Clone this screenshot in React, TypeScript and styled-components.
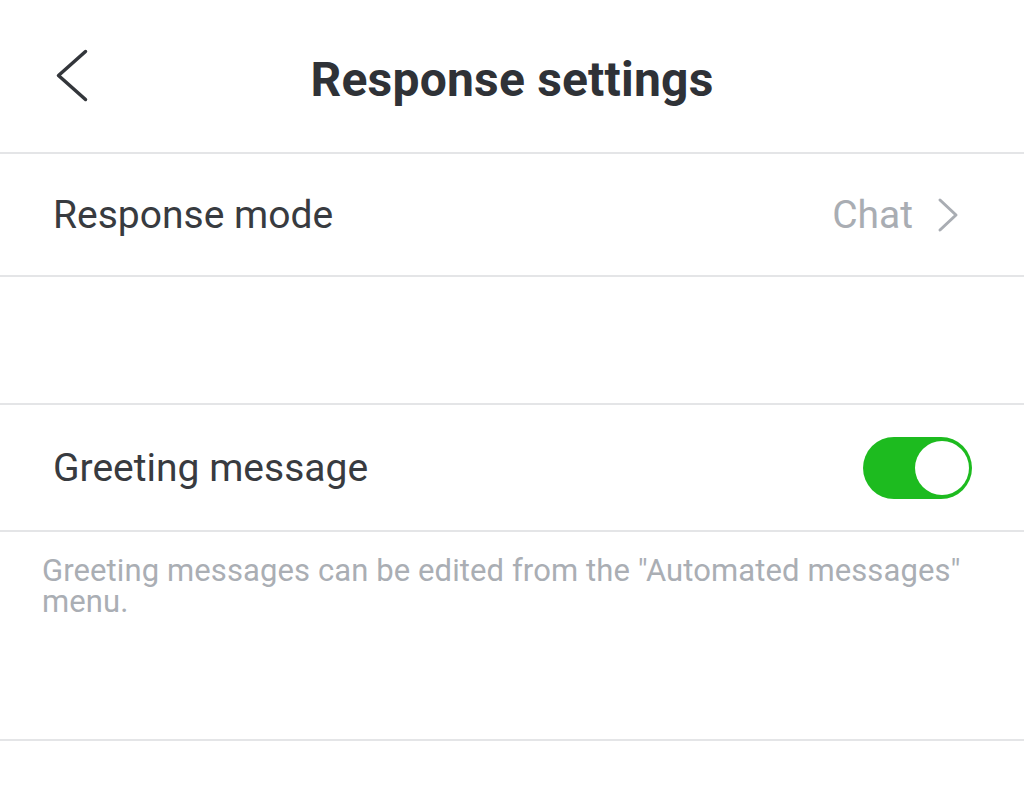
import React from "react";
import styled, { createGlobalStyle } from "styled-components";

const GlobalStyle = createGlobalStyle`
    html, body {
        margin: 0;
        padding: 0;
        background: #ffffff;
    }
    body {
        font-family: Roboto, "Noto Sans", "Liberation Sans", sans-serif;
        -webkit-font-smoothing: antialiased;
    }
`;

const Page = styled.div`
    width: 1024px;
    min-height: 796px;
    background: #ffffff;
`;

const Header = styled.header`
    position: relative;
    height: 152px;
    display: flex;
    align-items: center;
    justify-content: center;
    border-bottom: 2px solid #e4e5e7;
`;

const BackButton = styled.button`
    position: absolute;
    left: 50px;
    top: 42px;
    width: 44px;
    height: 66px;
    padding: 0;
    border: none;
    background: none;
    display: flex;
    align-items: center;
    justify-content: center;
`;

const Title = styled.h1`
    margin: 0;
    margin-top: 6px;
    font-size: 48px;
    font-weight: 700;
    color: #2f3237;
    letter-spacing: 0.2px;
`;

interface RowProps {
    readonly height: number;
}

const Row = styled.div<RowProps>`
    height: ${props => props.height}px;
    box-sizing: border-box;
    display: flex;
    align-items: center;
    justify-content: space-between;
    padding: 0 52px 0 53px;
    border-bottom: 2px solid #e4e5e7;
`;

const Spacer = styled.div`
    height: 126px;
    border-bottom: 2px solid #e4e5e7;
`;

const Label = styled.span`
    font-size: 39px;
    color: #383b40;
`;

const ValueLink = styled.div`
    display: flex;
    align-items: center;
    gap: 24px;
    margin-right: 13px;
`;

const Value = styled.span`
    font-size: 39px;
    color: #a9adb3;
`;

const Toggle = styled.div`
    width: 109px;
    height: 62px;
    border-radius: 31px;
    background: #1dbb1f;
    display: flex;
    align-items: center;
    justify-content: flex-end;
    padding: 0 3px;
    box-sizing: border-box;
`;

const Knob = styled.div`
    width: 54px;
    height: 54px;
    border-radius: 50%;
    background: #ffffff;
`;

const Note = styled.div`
    height: 209px;
    box-sizing: border-box;
    padding: 23px 38px 0 42px;
    border-bottom: 2px solid #e4e5e7;
    font-size: 31px;
    line-height: 31px;
    color: #aaaeb4;
    letter-spacing: 0.1px;
`;

const Chevron = ({ dir, color, w, h, stroke }: { dir: "left" | "right"; color: string; w: number; h: number; stroke: number }) => (
    <svg width={w} height={h} viewBox={`0 0 ${w} ${h}`} fill="none">
        <polyline
            points={
                dir === "left"
                    ? `${w - stroke} ${stroke}, ${stroke} ${h / 2}, ${w - stroke} ${h - stroke}`
                    : `${stroke} ${stroke}, ${w - stroke} ${h / 2}, ${stroke} ${h - stroke}`
            }
            stroke={color}
            strokeWidth={stroke}
            strokeLinecap="round"
            strokeLinejoin="round"
        />
    </svg>
);

export default function App() {
    return (
        <Page>
            <GlobalStyle />
            <Header>
                <BackButton aria-label="Back">
                    <Chevron dir="left" color="#33363b" w={34} h={55} stroke={3.5} />
                </BackButton>
                <Title>Response settings</Title>
            </Header>
            <Row height={123}>
                <Label>Response mode</Label>
                <ValueLink>
                    <Value>Chat</Value>
                    <Chevron dir="right" color="#a9adb3" w={22} h={36} stroke={3} />
                </ValueLink>
            </Row>
            <Spacer />
            <Row height={127}>
                <Label>Greeting message</Label>
                <Toggle>
                    <Knob />
                </Toggle>
            </Row>
            <Note>Greeting messages can be edited from the "Automated messages" menu.</Note>
        </Page>
    );
}
